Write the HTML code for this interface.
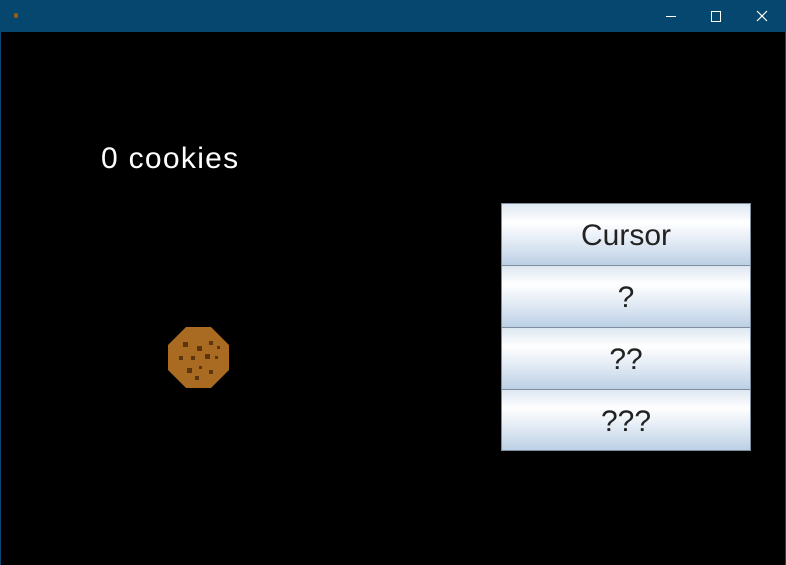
<!DOCTYPE html>
<html><head><style>
html,body{margin:0;padding:0;}
body{width:786px;height:565px;background:#000;position:relative;overflow:hidden;font-family:"Comic Sans MS","Liberation Sans",sans-serif;}
.tb{position:absolute;left:0;top:0;width:786px;height:32px;background:#05476f;}
.fr{position:absolute;left:0;top:32px;width:784px;height:533px;border-left:1px solid #0a4a72;border-right:1px solid #0a4a72;}
.t{position:absolute;left:101px;top:142px;color:#fff;font-size:30px;letter-spacing:1.3px;}
.b{position:absolute;left:501px;width:248px;height:61px;border:1px solid #7f8d9c;background:linear-gradient(#dde7f1 0%,#ffffff 30%,#e4ecf5 60%,#bcd0e5 100%);color:#222;font-size:30px;text-align:center;line-height:64px;box-sizing:content-box;}
</style></head><body>
<div class="tb">
<div style="position:absolute;left:14px;top:13px;width:4px;height:5px;background:#9a5a10;border-radius:2px"></div>
<div style="position:absolute;left:666px;top:16px;width:10px;height:1px;background:#fff"></div>
<div style="position:absolute;left:711px;top:11px;width:8px;height:9px;border:1px solid #fff"></div>
<svg style="position:absolute;left:756px;top:10px" width="12" height="12"><path d="M1 1L11 11M11 1L1 11" stroke="#fff" stroke-width="1.2"/></svg>
</div>
<div class="fr"></div>
<div class="t">0 cookies</div>
<svg style="position:absolute;left:167px;top:326px" width="63" height="63" viewBox="0 0 63 63">
<polygon points="19,1 44,1 62,19 62,44 44,62 19,62 1,44 1,19" fill="#a96b22"/>
<g fill="#5a3510"><rect x="16" y="16" width="5" height="5"/><rect x="30" y="20" width="5" height="5"/><rect x="42" y="15" width="4" height="4"/><rect x="12" y="30" width="4" height="4"/><rect x="24" y="30" width="4" height="4"/><rect x="38" y="28" width="5" height="5"/><rect x="48" y="30" width="3" height="3"/><rect x="20" y="42" width="5" height="5"/><rect x="32" y="40" width="3" height="3"/><rect x="42" y="44" width="4" height="4"/><rect x="28" y="50" width="4" height="4"/><rect x="50" y="20" width="3" height="3"/></g>
</svg>
<div class="b" style="top:203px">Cursor</div>
<div class="b" style="top:265px">?</div>
<div class="b" style="top:327px">??</div>
<div class="b" style="top:389px;height:60px">???</div>
</body></html>
